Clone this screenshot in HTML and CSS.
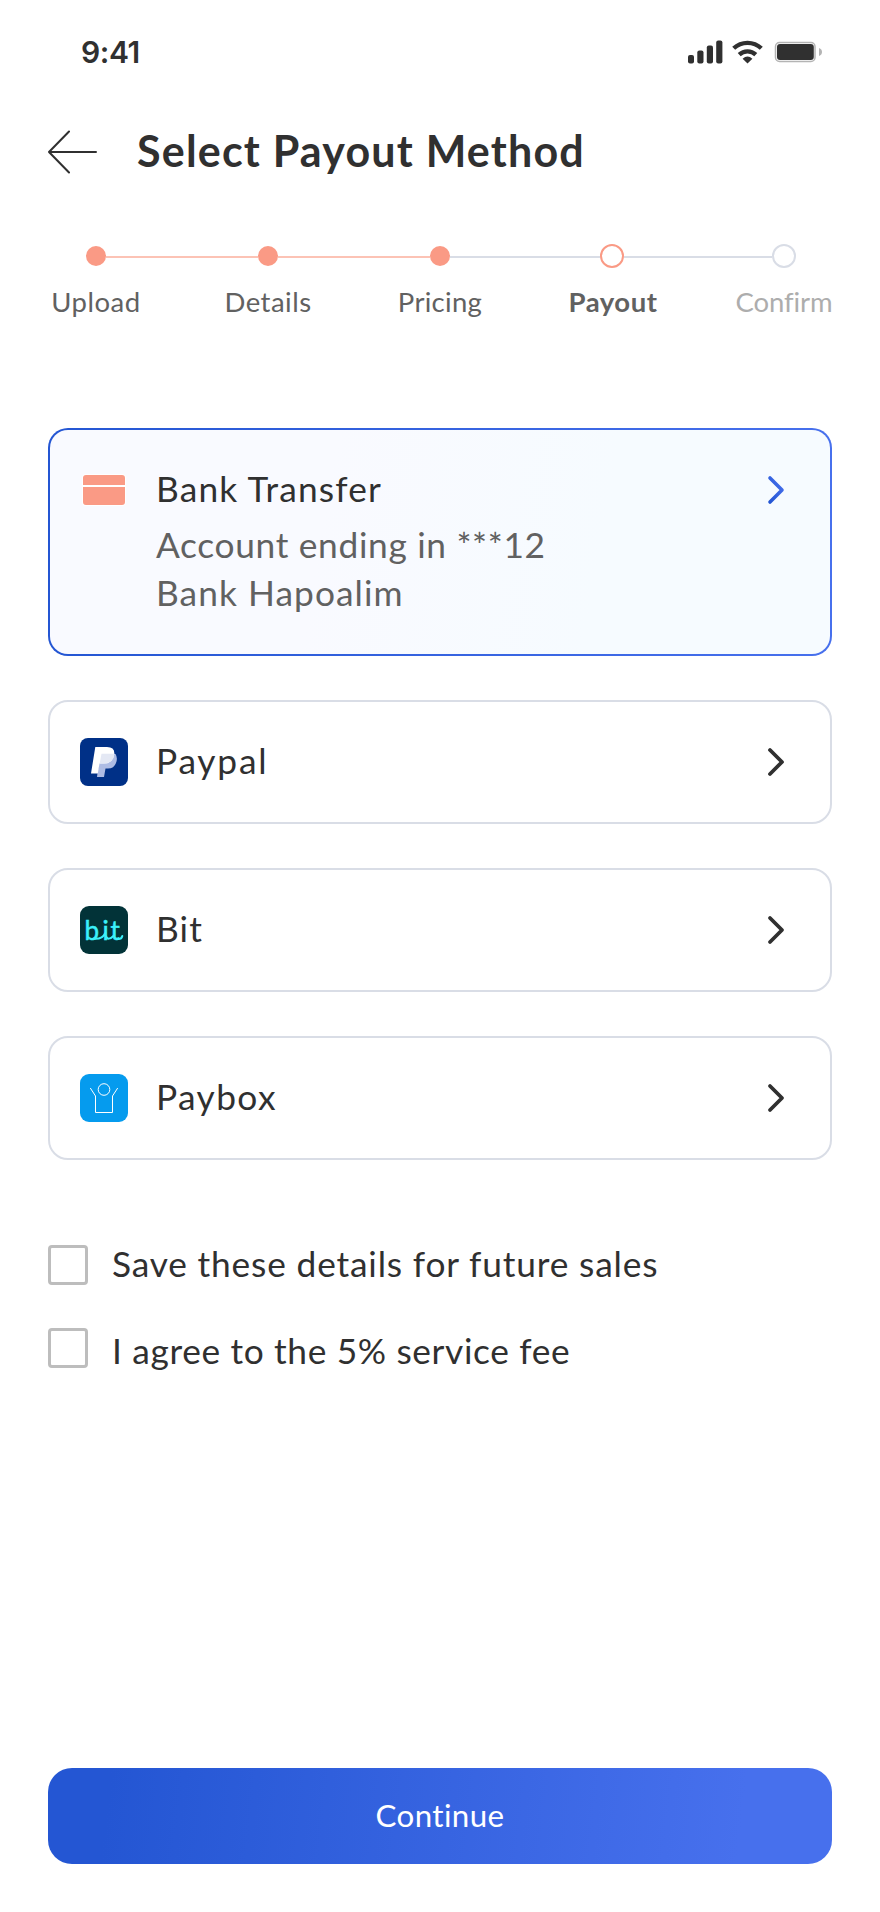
FILE: index.html
```html
<!DOCTYPE html>
<html lang="en">
<head>
<meta charset="utf-8">
<title>Select Payout Method</title>
<link rel="stylesheet" href="styles.css">
</head>
<body>
<div class="screen">
  <div class="status-bar">
    <span class="time">9:41</span>
    <svg class="status-icons" width="136" height="26" viewBox="687 39 136 26" fill="#303030">
      <rect x="688" y="55" width="6" height="8.500" rx="2"/>
      <rect x="697.300" y="50.500" width="6.200" height="13" rx="2"/>
      <rect x="706.800" y="45.500" width="6.200" height="18" rx="2"/>
      <rect x="716.200" y="40.500" width="6.200" height="23" rx="2"/>
      <path d="M733.700 48.300A20 20 0 0 1 761.300 48.300M739.200 54.600A12.200 12.200 0 0 1 755.800 54.600" fill="none" stroke="#303030" stroke-width="4.300"/>
      <path d="M742.600 58.800Q747.500 54.200 752.400 58.800L747.500 63.600Z"/>
      <rect x="775.500" y="42.500" width="39.500" height="19" rx="4" fill="#fff" stroke="#b4b4b4" stroke-width="1.500"/>
      <rect x="777" y="44" width="36.800" height="16" rx="3"/>
      <path d="M819 48V56Q822 54.800 822 52T819 48Z" fill="#b4b4b4"/>
    </svg>
  </div>

  <header class="header">
    <svg class="back" width="50" height="44" viewBox="0 0 50 44" fill="none" stroke="#303030" stroke-width="2" stroke-linecap="round" stroke-linejoin="round"><path d="M48 22H1M21 1.500L1 22L21 42.500"/></svg>
    <h1 class="title">Select Payout Method</h1>
  </header>

  <div class="track">
    <span class="dot"></span><span class="line line-done"></span>
    <span class="dot"></span><span class="line line-done"></span>
    <span class="dot"></span><span class="line"></span>
    <span class="dot dot-current"></span><span class="line"></span>
    <span class="dot dot-next"></span>
  </div>
  <div class="labels">
    <span class="label upload">Upload</span>
    <span class="label details">Details</span>
    <span class="label pricing">Pricing</span>
    <span class="label current">Payout</span>
    <span class="label next">Confirm</span>
  </div>

  <main class="methods">
    <div class="card selected">
      <div class="card-row">
        <svg class="icon" width="48" height="48" viewBox="0 0 48 48"><rect x="2" y="8" width="44" height="32" rx="4" fill="#fff"/><path d="M3 19V12Q3 9 6 9H42Q45 9 45 12V19ZM3 21H45V36Q45 39 42 39H6Q3 39 3 36Z" fill="#fa9a85"/></svg>
        <span class="name bank">Bank Transfer</span>
        <svg class="chevron" width="20" height="32" viewBox="0 0 20 32" fill="none" stroke="url(#blue)" stroke-width="3.600" stroke-linecap="round" stroke-linejoin="round"><defs><linearGradient id="blue" x1="0" y1="1" x2="1" y2="0"><stop offset="0" stop-color="#2456d3"/><stop offset="1" stop-color="#4770ed"/></linearGradient></defs><path d="M4 4L16 16L4 28"/></svg>
      </div>
      <div class="details-text"><div class="account">Account ending in ***12</div><div class="bank-name">Bank Hapoalim</div></div>
    </div>

    <div class="card">
      <div class="card-row">
        <svg class="icon" width="48" height="48" viewBox="0 0 48 48"><rect width="48" height="48" rx="8" fill="#003087"/><path d="M20 16H35.500Q38 20 36 25Q34 30.500 28 30.500H25.500L24 39H17Z" fill="#aebce4"/><path d="M15.300 9H27Q35 9 34.300 16.500Q33 25.500 24 25.500H19.500L17.800 35.500H11Z" fill="#fff"/><path d="M21.500 15.800H34.300Q33.500 25.500 24 25.500H19.700Z" fill="#e4e8f4"/></svg>
        <span class="name paypal">Paypal</span>
        <svg class="chevron" width="20" height="32" viewBox="0 0 20 32"><path class="chev-path" d="M4 4L16 16L4 28"/></svg>
      </div>
    </div>

    <div class="card">
      <div class="card-row">
        <svg class="icon" width="48" height="48" viewBox="0 0 48 48"><rect width="48" height="48" rx="9" fill="#023338"/><text class="bit-logo" x="4.500 22.500 30.500" y="33.500">bit</text><path d="M14 32.800Q22.500 33.500 25.300 27M25.700 30Q28 35.500 34 29.500M37.500 33Q41.500 33.500 42.300 30" fill="none" stroke="#3bf0fb" stroke-width="2" stroke-linecap="round"/></svg>
        <span class="name bit">Bit</span>
        <svg class="chevron" width="20" height="32" viewBox="0 0 20 32"><path class="chev-path" d="M4 4L16 16L4 28"/></svg>
      </div>
    </div>

    <div class="card">
      <div class="card-row">
        <svg class="icon" width="48" height="48" viewBox="0 0 48 48"><rect width="48" height="48" rx="9" fill="#059bee"/><g fill="none" stroke="#fff" stroke-width="1"><circle cx="24" cy="15.500" r="5.800"/><path d="M10.300 14L15.500 22V38.500H32.500V22L37.700 14"/></g></svg>
        <span class="name paybox">Paybox</span>
        <svg class="chevron" width="20" height="32" viewBox="0 0 20 32"><path class="chev-path" d="M4 4L16 16L4 28"/></svg>
      </div>
    </div>
  </main>

  <div class="options">
    <label class="option"><span class="box"></span><span class="option-text save">Save these details for future sales</span></label>
    <label class="option agree"><span class="box"></span><span class="option-text fee">I agree to the 5% service fee</span></label>
  </div>

  <button class="continue" type="button">Continue</button>
</div>
</body>
</html>
```

FILE: styles.css
```css
* { box-sizing: border-box; }
body { margin: 0; background: #fff; }
.screen {
  width: 880px;
  height: 1912px;
  padding: 0 48px 48px;
  display: flex;
  flex-direction: column;
  font-family: Lato, sans-serif;
  color: #303030;
  background: #fff;
  font-kerning: normal;
  white-space: nowrap;
}
.status-bar {
  height: 104px;
  padding: 0 9px 0 33px;
  display: flex;
  align-items: center;
  justify-content: space-between;
}
.time { font: 600 30px/40px Inter, sans-serif; letter-spacing: -0.400px; }
.header { display: flex; align-items: center; height: 96px; }
.back { margin-right: 39px; flex: none; }
.title { margin: 0; padding-bottom: 2px; font-size: 43px; font-weight: 700; line-height: 60px; letter-spacing: 1.200px; }
.track { display: flex; align-items: center; height: 24px; margin-top: 44px; padding-left: 38px; }
.dot { width: 20px; height: 20px; border-radius: 50%; background: #fa9a85; flex: none; }
.dot-current, .dot-next { width: 24px; height: 24px; background: #fff; border: 2px solid #fa9a85; }
.dot-next { border-color: #d9dde6; }
.line { width: 152px; height: 2px; margin-top: 2px; background: #d9dde6; flex: 0 1 auto; }
.line-done { background: #fcc3b5; }
.dot + .line:nth-of-type(6) { width: 150px; }
.dot-current + .line { width: 148px; }
.labels { display: grid; grid-template-columns: repeat(5, 172px); margin: 16px -38px 0; }
.label { text-align: center; font-size: 27.500px; line-height: 36px; color: #616161; letter-spacing: 0.500px; }
.pricing { letter-spacing: 0.300px; }
.current { font-weight: 700; padding-left: 2px; }
.next { color: #adadad; letter-spacing: -0.100px; }
.methods { margin-top: 108px; display: flex; flex-direction: column; gap: 44px; }
.card { height: 124px; padding: 0 44px 0 30px; border: 2px solid #d9dde6; border-radius: 20px; background: #fff; }
.card-row { display: flex; align-items: center; height: 120px; }
.selected {
  height: 228px;
  border-color: transparent;
  background: linear-gradient(100deg, #f9faff 35%, #f6fbff 70%) padding-box, linear-gradient(90deg, #2456d3, #4770ed) border-box;
}
.icon { flex: none; margin-right: 28px; }
.name { flex: 1; padding-bottom: 2px; font-size: 35.300px; line-height: 48px; letter-spacing: 1.150px; }
.paypal { letter-spacing: 1.800px; }
.paybox { letter-spacing: 1.400px; }
.chevron { flex: none; overflow: visible; }
.chev-path { fill: none; stroke: #303030; stroke-width: 3.800; stroke-linecap: round; stroke-linejoin: round; }
.bit-logo { font: 26px Lato, sans-serif; fill: #3bf0fb; stroke: #3bf0fb; stroke-width: 0.500; }
.details-text { margin: -29px 0 0 76px; font-size: 35.300px; line-height: 48px; letter-spacing: 0.680px; color: #616161; }
.bank-name { letter-spacing: 1.050px; }
.options { margin-top: 85px; }
.option { display: flex; height: 40px; align-items: center; }
.box { width: 40px; height: 40px; margin-right: 24px; border: 3px solid #bdbdbd; border-radius: 4px; flex: none; }
.option-text { padding-bottom: 2px; font-size: 35.300px; line-height: 48px; letter-spacing: 0.830px; }
.agree { margin-top: 43px; }
.agree .option-text { padding: 5px 0 0; letter-spacing: 0.650px; }
.continue {
  width: 784px;
  height: 96px;
  margin-top: auto;
  padding: 0 0 2px;
  border: 0;
  border-radius: 24px;
  background: linear-gradient(97deg, #2456d3 8%, #4770ed 88%);
  color: #fff;
  font: 400 31.300px/40px Lato, sans-serif;
  letter-spacing: 0.400px;
}
```
